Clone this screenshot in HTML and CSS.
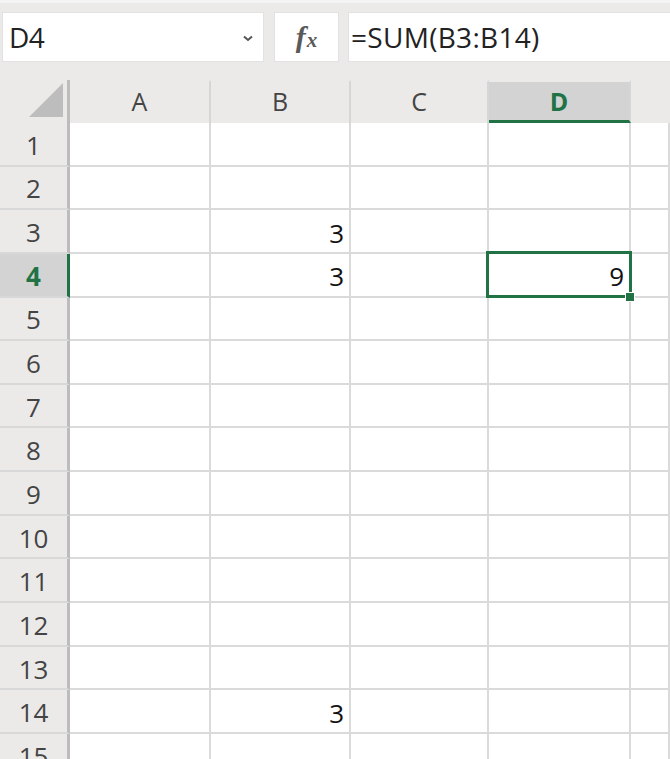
FILE: index.html
```html
<!DOCTYPE html>
<html>
<head>
<meta charset="utf-8">
<link rel="stylesheet" href="styles.css">
</head>
<body>
<div class="app">
  <div class="toolbar">
    <div class="namebox">
      <span class="name">D4</span>
      <svg class="chev" width="10" height="7" viewBox="0 0 10 7"><path d="M1 1.5 L5 5 L9 1.5" fill="none" stroke="#555" stroke-width="2"/></svg>
    </div>
    <div class="fxbox"><span class="fx-f">f</span><span class="fx-x">x</span></div>
    <div class="formula">=SUM(B3:B14)</div>
  </div>
  <div class="sheet">
    <div class="corner"><svg width="36" height="36" viewBox="0 0 36 36"><polygon points="35,1 35,35 1,35" fill="#bdbdbd"/></svg></div>
    <div class="ch">A</div>
    <div class="ch">B</div>
    <div class="ch">C</div>
    <div class="ch ch-sel">D</div>
    <div class="ch ch-last"></div>

    <div class="rh">1</div><div class="c"></div><div class="c"></div><div class="c"></div><div class="c"></div><div class="c"></div>
    <div class="rh">2</div><div class="c"></div><div class="c"></div><div class="c"></div><div class="c"></div><div class="c"></div>
    <div class="rh">3</div><div class="c"></div><div class="c">3</div><div class="c"></div><div class="c"></div><div class="c"></div>
    <div class="rh rh-sel">4</div><div class="c"></div><div class="c">3</div><div class="c"></div><div class="c sel">9<span class="handle"></span></div><div class="c"></div>
    <div class="rh">5</div><div class="c"></div><div class="c"></div><div class="c"></div><div class="c"></div><div class="c"></div>
    <div class="rh">6</div><div class="c"></div><div class="c"></div><div class="c"></div><div class="c"></div><div class="c"></div>
    <div class="rh">7</div><div class="c"></div><div class="c"></div><div class="c"></div><div class="c"></div><div class="c"></div>
    <div class="rh">8</div><div class="c"></div><div class="c"></div><div class="c"></div><div class="c"></div><div class="c"></div>
    <div class="rh">9</div><div class="c"></div><div class="c"></div><div class="c"></div><div class="c"></div><div class="c"></div>
    <div class="rh">10</div><div class="c"></div><div class="c"></div><div class="c"></div><div class="c"></div><div class="c"></div>
    <div class="rh">11</div><div class="c"></div><div class="c"></div><div class="c"></div><div class="c"></div><div class="c"></div>
    <div class="rh">12</div><div class="c"></div><div class="c"></div><div class="c"></div><div class="c"></div><div class="c"></div>
    <div class="rh">13</div><div class="c"></div><div class="c"></div><div class="c"></div><div class="c"></div><div class="c"></div>
    <div class="rh">14</div><div class="c"></div><div class="c">3</div><div class="c"></div><div class="c"></div><div class="c"></div>
    <div class="rh">15</div><div class="c"></div><div class="c"></div><div class="c"></div><div class="c"></div><div class="c"></div>
  </div>
</div>
</body>
</html>
```
FILE: styles.css
```css
html, body {
  margin: 0;
  padding: 0;
  width: 670px;
  height: 759px;
  overflow: hidden;
  background: #ffffff;
  font-family: "Open Sans", "Noto Sans", sans-serif;
}
.app {
  width: 670px;
  height: 759px;
  overflow: hidden;
}
.toolbar {
  height: 80px;
  box-sizing: border-box;
  background: #ebeae9;
  border-top: 3px solid #f4f4f4;
  padding: 9px 0 0 2px;
  display: flex;
  align-items: flex-start;
}
.namebox, .fxbox, .formula {
  height: 50px;
  box-sizing: border-box;
  background: #ffffff;
  border: 1px solid #e2e2e2;
  display: flex;
  align-items: center;
}
.namebox {
  width: 262px;
  padding: 0 10px 0 6px;
  justify-content: space-between;
}
.name {
  font-size: 28px;
  color: #222;
  letter-spacing: -0.5px;
}
.chev { margin-top: 2px; }
.fxbox {
  width: 65px;
  margin-left: 10px;
  justify-content: center;
  font-family: "Liberation Serif", serif;
  font-style: italic;
  font-weight: bold;
  color: #5a5a5a;
}
.fx-f { font-size: 30px; }
.fx-x { font-size: 21px; margin-top: 7px; margin-left: 1px; }
.formula {
  flex: 1;
  margin-left: 9px;
  border-right: none;
  padding-left: 2px;
  font-size: 28px;
  color: #222;
  letter-spacing: 0.3px;
}
.sheet {
  display: grid;
  grid-template-columns: 70px 141px 140px 138px 142px 39px;
  grid-template-rows: 43px repeat(15, 43.65px);
  background: #ffffff;
}
.corner {
  background: #ebeae9;
  border-right: 3px solid #bcbcbc;
  box-sizing: border-box;
  display: flex;
  align-items: flex-start;
  justify-content: flex-end;
  padding: 2px 3px 0 0;
}
.corner svg { display: block; }
.ch {
  background: #ebeae9;
  box-sizing: border-box;
  border-right: 2px solid #d6d6d6;
  border-top: 2px solid #ebeae9;
  display: flex;
  align-items: center;
  justify-content: center;
  font-size: 25px;
  color: #444;
  padding-bottom: 4px;
}
.ch-last { border-right: none; }
.ch-sel {
  background: #d3d3d3;
  border-bottom: 3px solid #217346;
  color: #217346;
  font-weight: bold;
  padding-bottom: 1px;
}
.rh {
  background: #ebeae9;
  box-sizing: border-box;
  border-right: 3px solid #bcbcbc;
  border-bottom: 2px solid #d8d8d8;
  display: flex;
  align-items: center;
  justify-content: center;
  font-size: 26px;
  color: #444;
  padding-top: 2px;
}
.rh-sel {
  background: #d3d3d3;
  border-right-color: #217346;
  color: #217346;
  font-weight: bold;
}
.c {
  box-sizing: border-box;
  border-right: 2px solid #dadada;
  border-bottom: 2px solid #dadada;
  display: flex;
  align-items: center;
  justify-content: flex-end;
  padding: 3px 5px 0 0;
  font-size: 26px;
  color: #111;
  position: relative;
}
.sel::after {
  content: "";
  position: absolute;
  left: -3px;
  top: -3px;
  right: -3px;
  bottom: -2px;
  border: 3px solid #217346;
}
.handle {
  position: absolute;
  right: -6px;
  bottom: -6px;
  width: 8px;
  height: 8px;
  background: #217346;
  border: 1px solid #ffffff;
  z-index: 2;
}
```
